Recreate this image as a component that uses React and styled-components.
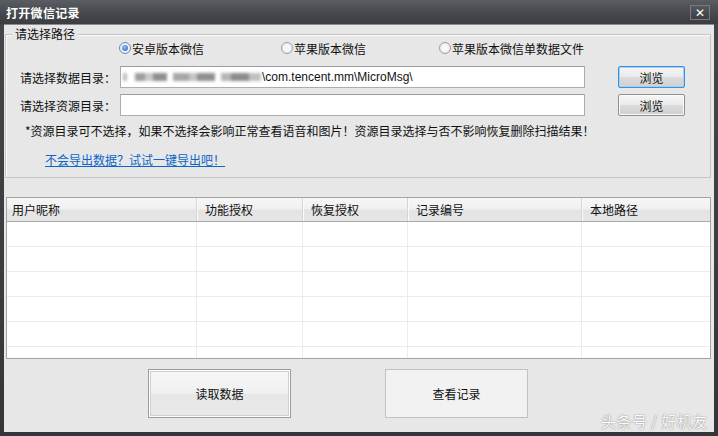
import React from "react";
import styled, { createGlobalStyle } from "styled-components";

const GlobalStyle = createGlobalStyle`
  html, body {
    margin: 0;
    padding: 0;
    width: 718px;
    height: 436px;
    overflow: hidden;
    background: #3d3f43;
  }
  * {
    box-sizing: border-box;
  }
`;

const Window = styled.div`
  width: 718px;
  height: 436px;
  display: flex;
  flex-direction: column;
  background: linear-gradient(#45474b, #34363a);
  font-family: "Noto Sans CJK SC", "Liberation Sans", sans-serif;
  font-size: 12px;
  color: #111;
`;

const TitleBar = styled.div`
  height: 24px;
  display: flex;
  align-items: center;
  justify-content: space-between;
  padding: 0 8px 0 6px;
  background: linear-gradient(#5a5d62, #45484c 55%, #3b3d41);
`;

const Title = styled.span`
  color: #fff;
  font-weight: bold;
  font-size: 12px;
  letter-spacing: 0.3px;
`;

const CloseBtn = styled.div`
  width: 20px;
  height: 15px;
  margin-top: 1px;
  border: 1px solid #777a7f;
  background: linear-gradient(#55585d, #3c3e42);
  color: #fff;
  display: flex;
  align-items: center;
  justify-content: center;
  font-family: "DejaVu Sans", sans-serif;
  font-weight: bold;
  font-size: 12px;
  line-height: 1;
`;

const Body = styled.div`
  position: relative;
  flex: 1;
  margin: 0 4px 4px 4px;
  background: #e7e7e7;
  display: flex;
  flex-direction: column;
  border-top: 1px solid #8a8c90;
`;

const Group = styled.div`
  position: relative;
  height: 144px;
  margin: 9px 3px 0 1px;
  border: 1px solid #c4c4c4;
  box-shadow: inset 1px 1px 0 #fafafa;
  display: flex;
  flex-direction: column;
`;

const Legend = styled.span`
  position: absolute;
  top: -9px;
  left: 6px;
  padding: 0 3px;
  background: #e7e7e7;
  line-height: 16px;
`;

const RadioRow = styled.div`
  height: 26px;
  display: flex;
  align-items: center;
  padding-left: 113px;
`;

const RadioOption = styled.label`
  width: ${(p) => p.$w}px;
  display: flex;
  align-items: center;
  gap: 1px;
  white-space: nowrap;
`;

const RadioDot = styled.span`
  width: 12px;
  height: 12px;
  border-radius: 50%;
  border: 1px solid ${(p) => (p.$on ? "#6e8db5" : "#a0a0a0")};
  background: radial-gradient(circle, #f8f8f8 40%, #dcdcdc);
  display: flex;
  align-items: center;
  justify-content: center;
  &::after {
    content: "";
    width: 6px;
    height: 6px;
    border-radius: 50%;
    background: ${(p) =>
      p.$on ? "radial-gradient(circle at 40% 35%, #8fc2ff, #1f5fbf)" : "transparent"};
  }
`;

const FieldRow = styled.div`
  height: 22px;
  margin-top: ${(p) => p.$mt}px;
  display: flex;
  align-items: center;
  padding-left: 14px;
`;

const FieldLabel = styled.span`
  width: 100px;
  white-space: nowrap;
`;

const TextBox = styled.div`
  width: 465px;
  height: 22px;
  border: 1px solid #abadb3;
  border-top-color: #9a9ca2;
  background: #fff;
  display: flex;
  align-items: center;
  padding-left: 2px;
  font-family: "Liberation Sans", "DejaVu Sans", sans-serif;
  font-size: 12px;
  overflow: hidden;
  white-space: nowrap;
`;

/* privacy-blurred part of the path, drawn as smudged blocks */
const Blurred = styled.span`
  width: 138px;
  height: 8px;
  margin-right: 1px;
  filter: blur(1.4px);
  background: linear-gradient(
    90deg,
    #bdbdbd 0 4px,
    transparent 4px 12px,
    #9d9d9d 12px 22px,
    #c8c8c8 22px 30px,
    #8f8f8f 30px 44px,
    transparent 44px 50px,
    #a6a6a6 50px 66px,
    #c4c4c4 66px 74px,
    #909090 74px 92px,
    transparent 92px 98px,
    #b6b6b6 98px 108px,
    #8c8c8c 108px 126px,
    #c0c0c0 126px 138px
  );
`;

const BrowseBtn = styled.button`
  width: 67px;
  height: 22px;
  margin-left: 33px;
  padding: 0;
  font-family: inherit;
  font-size: 12px;
  color: #111;
  background: linear-gradient(#f6f6f6, #eaeaea 50%, #dcdcdc 51%, #cfcfcf);
  border: 1px solid ${(p) => (p.$focus ? "#3c8ede" : "#8e8f8f")};
  border-radius: 2px;
  box-shadow: inset 0 0 0 1px ${(p) => (p.$focus ? "#9fd2f5" : "#fbfbfb")};
`;

const Note = styled.div`
  margin-top: 7px;
  padding-left: 19px;
  line-height: 16px;
  white-space: nowrap;
`;

const HelpLink = styled.a`
  margin: 13px 0 0 39px;
  align-self: flex-start;
  line-height: 16px;
  color: #0b66c9;
  text-decoration: underline;
`;

const Table = styled.div`
  height: 162px;
  margin: 19px 3px 0 2px;
  border: 1px solid #a4a4a4;
  background: #fff;
  overflow: hidden;
`;

const cols = "189px 106px 105px 174px 1fr";

const HeaderRow = styled.div`
  display: grid;
  grid-template-columns: ${cols};
  height: 24px;
  background: linear-gradient(#f6f6f6, #f1f1f1 45%, #e3e3e3 55%, #e6e6e6);
  border-bottom: 1px solid #a9a9a9;
`;

const HeaderCell = styled.div`
  display: flex;
  align-items: center;
  padding-left: ${(p) => (p.$first ? 5 : 8)}px;
  border-left: ${(p) => (p.$first ? "none" : "1px solid #d5d5d5")};
  box-shadow: ${(p) => (p.$first ? "none" : "inset 1px 0 0 #fafafa")};
`;

const DataRow = styled.div`
  display: grid;
  grid-template-columns: ${cols};
  height: 25px;
  border-bottom: 1px solid #ebebeb;
`;

const DataCell = styled.div`
  border-left: ${(p) => (p.$first ? "none" : "1px solid #ececec")};
`;

const ActionRow = styled.div`
  display: flex;
  gap: 94px;
  margin-top: 10px;
  padding-left: 144px;
`;

const ActionBtn = styled.button`
  width: 143px;
  height: 49px;
  padding: 0;
  font-family: inherit;
  font-size: 12px;
  color: #111;
  border: 1px solid ${(p) => (p.$primary ? "#9c9c9c" : "#c2c2c2")};
  background: ${(p) =>
    p.$primary
      ? "linear-gradient(#f7f7f7, #f0f0f0 50%, #e6e6e6 52%, #e9e9e9)"
      : "#f2f2f2"};
  box-shadow: ${(p) =>
    p.$primary ? "inset 0 0 0 1px #fdfdfd, inset 0 0 0 2px #cfcfcf" : "none"};
`;

const Watermark = styled.span`
  position: absolute;
  right: 6px;
  bottom: 1px;
  font-size: 15px;
  line-height: 20px;
  color: #fafafa;
  letter-spacing: 0.5px;
  text-shadow: 0 0 1px #8a8a8a, 0 0 2px #a8a8a8;
`;

const headers = ["用户昵称", "功能授权", "恢复授权", "记录编号", "本地路径"];

export default function App() {
  return (
    <>
      <GlobalStyle />
      <Window>
        <TitleBar>
          <Title>打开微信记录</Title>
          <CloseBtn>✕</CloseBtn>
        </TitleBar>
        <Body>
          <Group>
            <Legend>请选择路径</Legend>
            <RadioRow>
              <RadioOption $w={162}>
                <RadioDot $on />
                安卓版本微信
              </RadioOption>
              <RadioOption $w={158}>
                <RadioDot />
                苹果版本微信
              </RadioOption>
              <RadioOption $w={160}>
                <RadioDot />
                苹果版本微信单数据文件
              </RadioOption>
            </RadioRow>
            <FieldRow $mt={5}>
              <FieldLabel>请选择数据目录：</FieldLabel>
              <TextBox>
                <Blurred />
                \com.tencent.mm\MicroMsg\
              </TextBox>
              <BrowseBtn $focus>浏览</BrowseBtn>
            </FieldRow>
            <FieldRow $mt={6}>
              <FieldLabel>请选择资源目录：</FieldLabel>
              <TextBox />
              <BrowseBtn>浏览</BrowseBtn>
            </FieldRow>
            <Note>
              *资源目录可不选择，如果不选择会影响正常查看语音和图片！资源目录选择与否不影响恢复删除扫描结果！
            </Note>
            <HelpLink href="#">不会导出数据？试试一键导出吧！</HelpLink>
          </Group>
          <Table>
            <HeaderRow>
              {headers.map((h, i) => (
                <HeaderCell key={h} $first={i === 0}>
                  {h}
                </HeaderCell>
              ))}
            </HeaderRow>
            {[0, 1, 2, 3, 4, 5].map((r) => (
              <DataRow key={r}>
                {headers.map((h, i) => (
                  <DataCell key={h} $first={i === 0} />
                ))}
              </DataRow>
            ))}
          </Table>
          <ActionRow>
            <ActionBtn $primary>读取数据</ActionBtn>
            <ActionBtn>查看记录</ActionBtn>
          </ActionRow>
          <Watermark>头条号 / 好机友</Watermark>
        </Body>
      </Window>
    </>
  );
}
